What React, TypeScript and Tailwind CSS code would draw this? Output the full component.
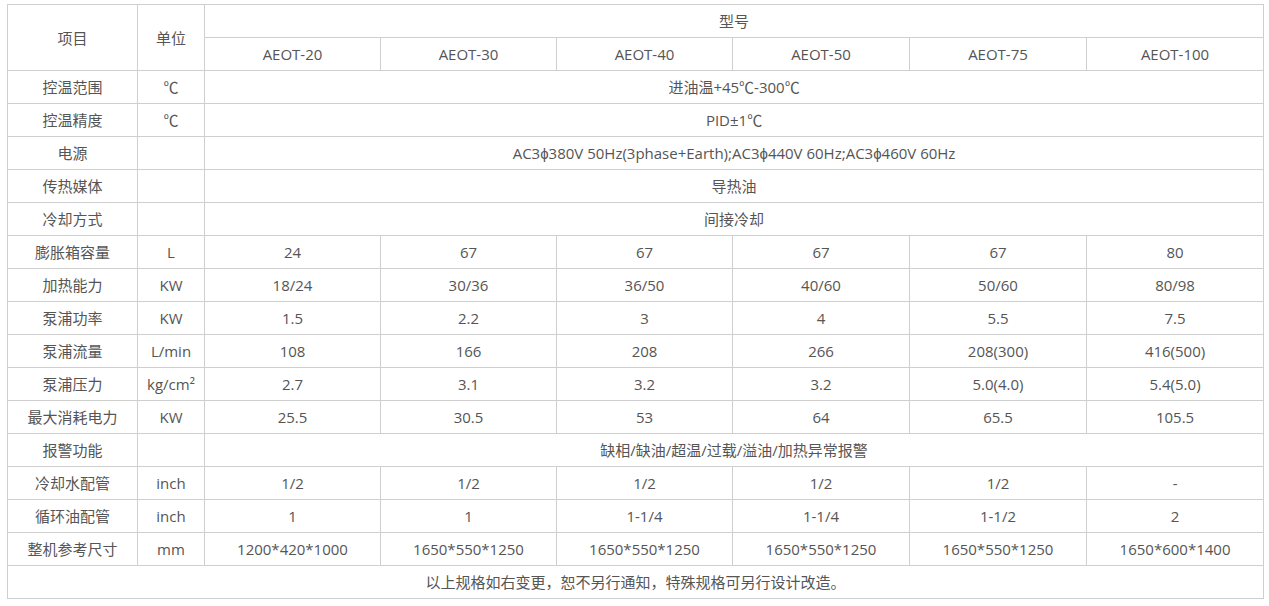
const models = ["AEOT-20", "AEOT-30", "AEOT-40", "AEOT-50", "AEOT-75", "AEOT-100"];

type Row = { name: string; unit: string; span?: string; values?: string[] };

const rows: Row[] = [
  { name: "控温范围", unit: "℃", span: "进油温+45℃-300℃" },
  { name: "控温精度", unit: "℃", span: "PID±1℃" },
  { name: "电源", unit: "", span: "AC3ϕ380V 50Hz(3phase+Earth);AC3ϕ440V 60Hz;AC3ϕ460V 60Hz" },
  { name: "传热媒体", unit: "", span: "导热油" },
  { name: "冷却方式", unit: "", span: "间接冷却" },
  { name: "膨胀箱容量", unit: "L", values: ["24", "67", "67", "67", "67", "80"] },
  { name: "加热能力", unit: "KW", values: ["18/24", "30/36", "36/50", "40/60", "50/60", "80/98"] },
  { name: "泵浦功率", unit: "KW", values: ["1.5", "2.2", "3", "4", "5.5", "7.5"] },
  { name: "泵浦流量", unit: "L/min", values: ["108", "166", "208", "266", "208(300)", "416(500)"] },
  { name: "泵浦压力", unit: "kg/cm²", values: ["2.7", "3.1", "3.2", "3.2", "5.0(4.0)", "5.4(5.0)"] },
  { name: "最大消耗电力", unit: "KW", values: ["25.5", "30.5", "53", "64", "65.5", "105.5"] },
  { name: "报警功能", unit: "", span: "缺相/缺油/超温/过载/溢油/加热异常报警" },
  { name: "冷却水配管", unit: "inch", values: ["1/2", "1/2", "1/2", "1/2", "1/2", "-"] },
  { name: "循环油配管", unit: "inch", values: ["1", "1", "1-1/4", "1-1/4", "1-1/2", "2"] },
  {
    name: "整机参考尺寸",
    unit: "mm",
    values: ["1200*420*1000", "1650*550*1250", "1650*550*1250", "1650*550*1250", "1650*550*1250", "1650*600*1400"],
  },
];

const cell = "border border-[#cfcfcf] text-center align-middle p-0";

export default function App() {
  return (
    <div className="bg-white min-h-screen pt-[4px] pl-[7px] text-[15px] leading-[20px] text-[#555] font-['Open_Sans','Noto_Sans_CJK_SC',sans-serif]">
      <table className="table-fixed border-collapse w-[1256px]">
        <colgroup>
          <col className="w-[130px]" />
          <col className="w-[67px]" />
          <col className="w-[176px]" />
          <col className="w-[176px]" />
          <col className="w-[176px]" />
          <col className="w-[177px]" />
          <col className="w-[177px]" />
          <col className="w-[177px]" />
        </colgroup>
        <tbody>
          <tr className="h-[33px]">
            <td rowSpan={2} className={cell}>项目</td>
            <td rowSpan={2} className={cell}>单位</td>
            <td colSpan={6} className={cell}>型号</td>
          </tr>
          <tr className="h-[33px]">
            {models.map((m) => (
              <td key={m} className={cell}>{m}</td>
            ))}
          </tr>
          {rows.map((r) => (
            <tr key={r.name} className="h-[33px]">
              <td className={cell}>{r.name}</td>
              <td className={cell}>{r.unit}</td>
              {r.span ? (
                <td colSpan={6} className={cell}>{r.span}</td>
              ) : (
                r.values!.map((v, i) => (
                  <td key={i} className={cell}>{v}</td>
                ))
              )}
            </tr>
          ))}
          <tr className="h-[33px]">
            <td colSpan={8} className={cell}>以上规格如右变更，恕不另行通知，特殊规格可另行设计改造。</td>
          </tr>
        </tbody>
      </table>
    </div>
  );
}
